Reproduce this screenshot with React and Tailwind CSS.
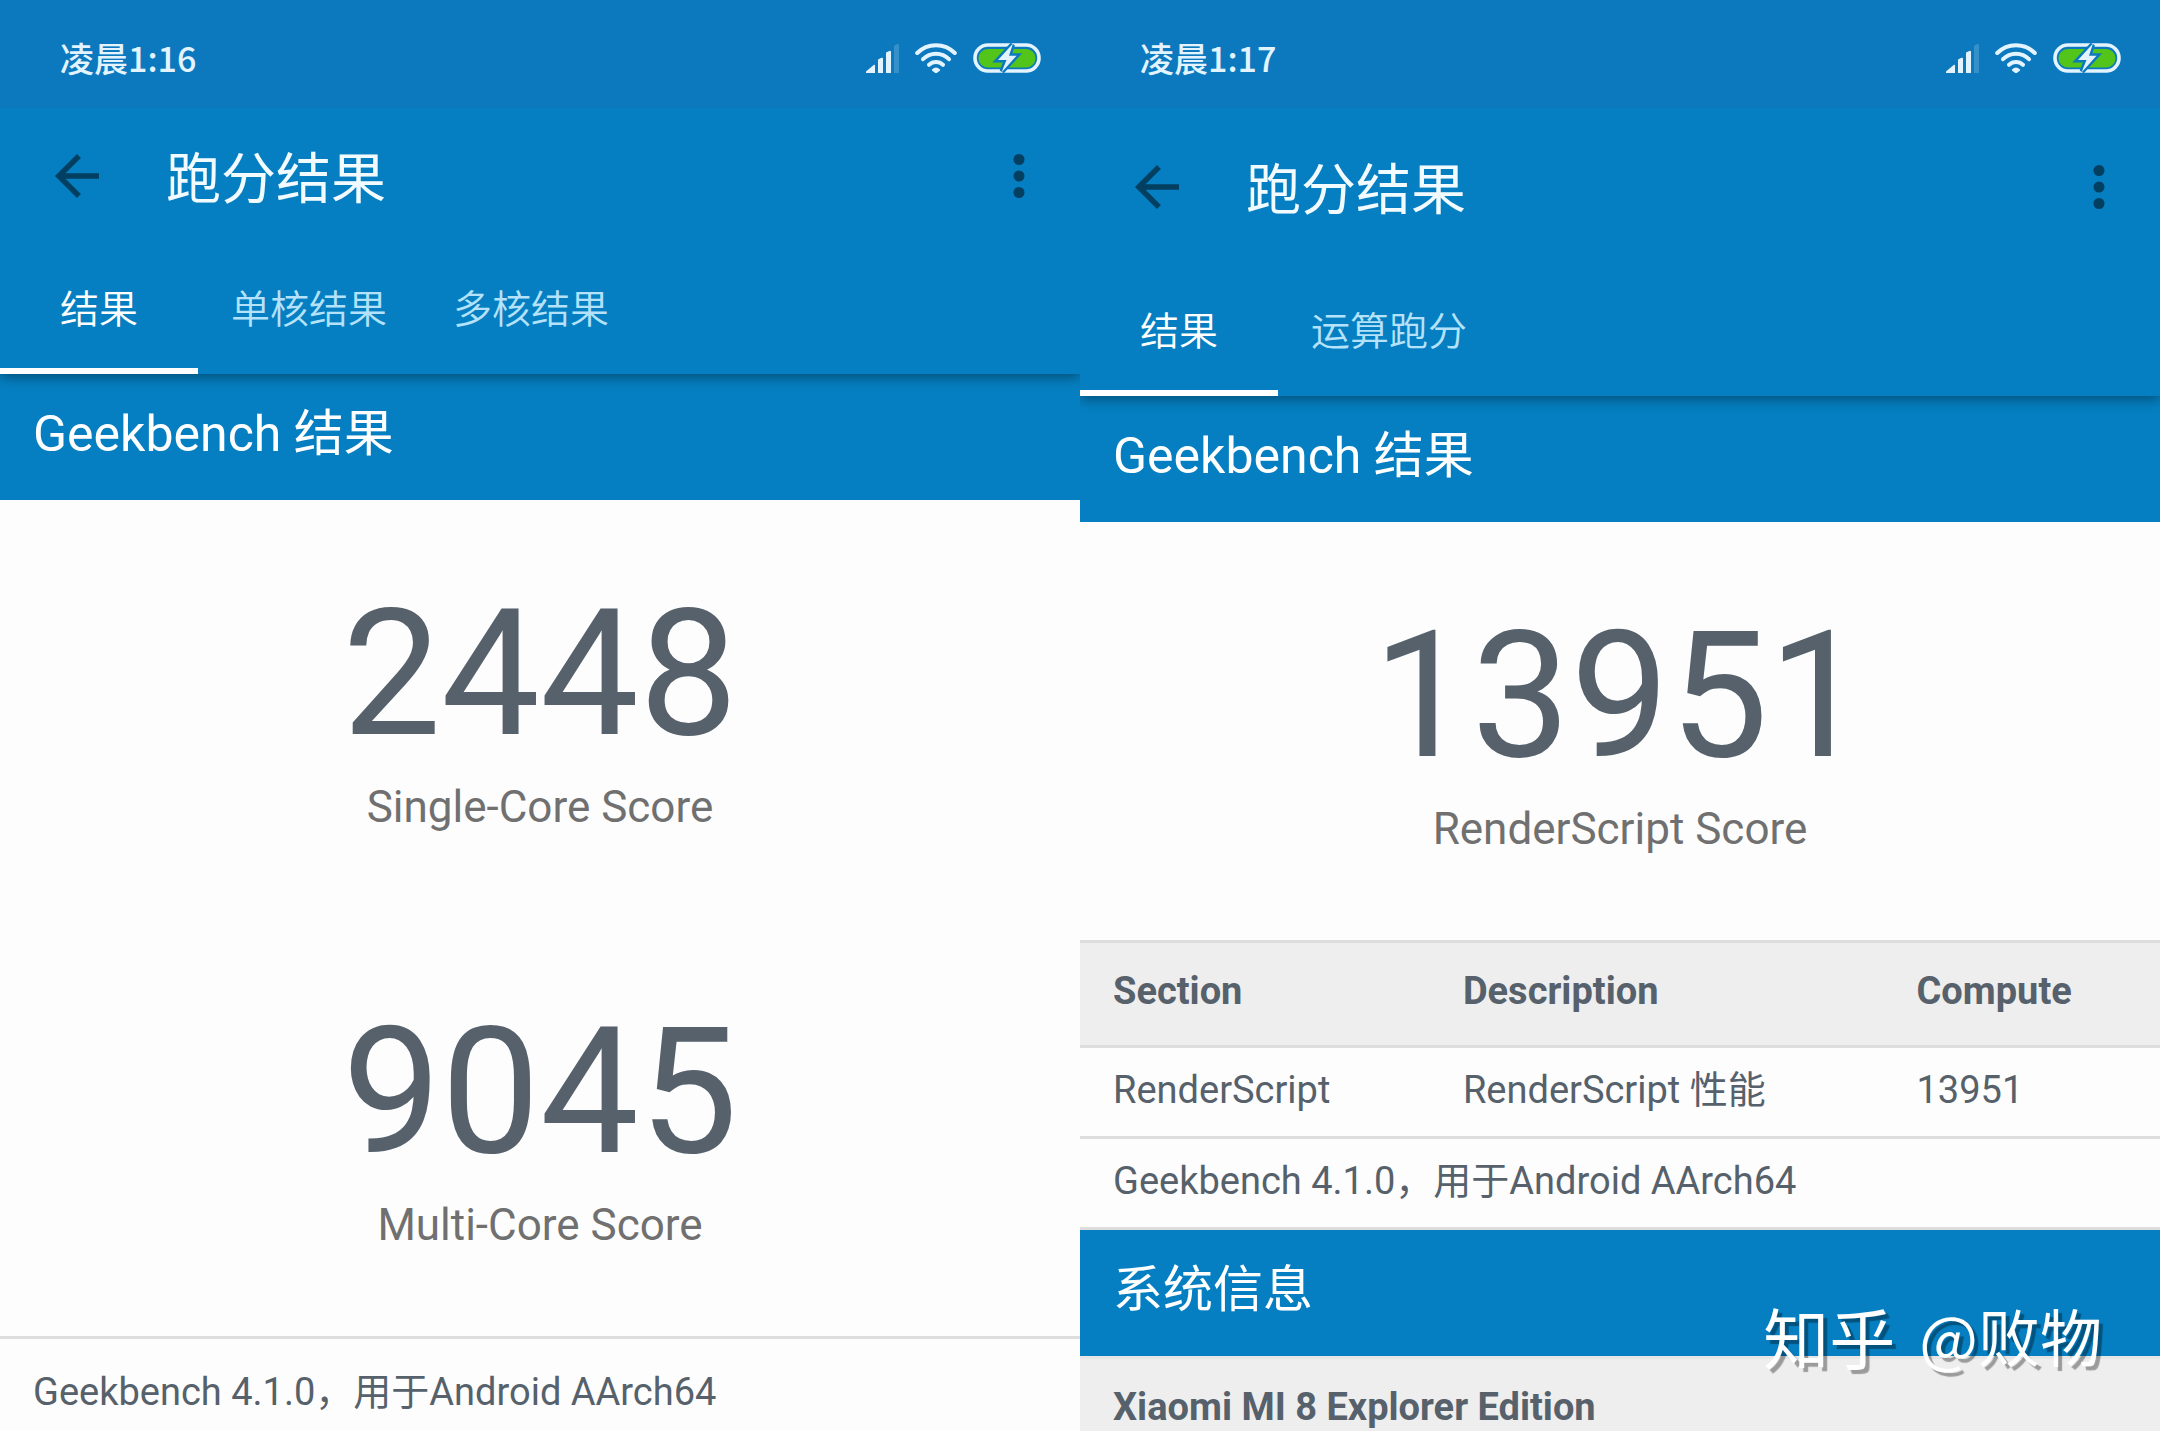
import React, { useState } from 'react';
import clsx from 'clsx';

const VERSION_TEXT = 'Geekbench 4.1.0，用于Android AArch64';

const SignalIcon = () => (
  <svg viewBox="0 0 33 29" className="w-[33px] h-[29px]" fill="#e3f4ff">
    <path d="M0 29V27.5L8 20.8Q9 20.5 9 21.5V29Z" />
    <path d="M12 29V15.5L15.5 13.7Q17 13.4 17 14.6V29Z" />
    <path d="M20 29V8.6L23.5 6.9Q25 6.6 25 7.8V29Z" />
    <path d="M28 29V1.7L31.5 0Q33 -0.2 33 1V29Z" opacity="0.2" />
  </svg>
);

const WifiIcon = () => (
  <svg viewBox="0 0 42 30" className="w-[42px] h-[30px]" fill="none" stroke="#e3f4ff" strokeWidth="4" strokeLinecap="round">
    <path d="M2.2 10A26.5 26.5 0 0 1 39.8 10" />
    <path d="M8 16.2A18 18 0 0 1 34 16.2" />
    <path d="M14 21.8A10 10 0 0 1 28 21.8" />
    <path d="M17 26.6Q21 22.4 25 26.6Q25.4 27.2 24.8 27.8L22.4 29.5Q21 30.5 19.6 29.5L17.2 27.8Q16.6 27.2 17 26.6Z" fill="#e3f4ff" stroke="none" />
  </svg>
);

const BatteryIcon = () => (
  <svg viewBox="0 0 68 30" className="w-[68px] h-[30px]">
    <rect x="2" y="2" width="64" height="26" rx="13" fill="none" stroke="#e3f4ff" strokeWidth="3.6" />
    <rect x="5.5" y="6" width="57" height="18.5" rx="9.2" fill="#52c41a" />
    <path
      d="M39.5 1.5L25 17H33.5L29 28.5L43.5 12.8H36Z"
      fill="#0c79bf"
      stroke="#0c79bf"
      strokeWidth="5"
    />
    <path d="M40 0.5L25 17H33.5L28.5 29.5L43.5 12.8H36Z" fill="#e3f4ff" />
  </svg>
);

const BackIcon = () => (
  <svg viewBox="0 0 24 24" className="w-[66px] h-[66px]" fill="#033f61">
    <path d="M20 11H7.83l5.59-5.59L12 4l-8 8 8 8 1.41-1.41L7.83 13H20v-2z" />
  </svg>
);

const MoreIcon = () => (
  <svg viewBox="0 0 24 24" className="w-[66px] h-[66px]" fill="#033f61">
    <circle cx="12" cy="6" r="2" />
    <circle cx="12" cy="12" r="2" />
    <circle cx="12" cy="18" r="2" />
  </svg>
);

const StatusBar = ({ time }) => (
  <div className="flex items-center justify-between h-27 pt-2 pl-[60px] pr-[39px] bg-[#0c79bf]">
    <span className="font-['Noto_Sans_CJK_SC',sans-serif] text-[34px] leading-[52px] font-medium text-[#e3f4ff]">{time}</span>
    <div className="flex items-center gap-4">
      <SignalIcon />
      <WifiIcon />
      <BatteryIcon />
    </div>
  </div>
);

const AppBar = ({ time, tabs, tall }) => {
  const [active, setActive] = useState(0);

  return (
    <header className="relative z-10 bg-[#057fc1] shadow-[0_3px_12px_rgba(0,0,0,0.4)]">
      <StatusBar time={time} />
      <div className={clsx('flex items-center pb-1 pl-11 pr-[28px]', tall ? 'h-[162px]' : 'h-[140px]')}>
        <button type="button" aria-label="返回">
          <BackIcon />
        </button>
        <h1 className="flex-1 ml-14 pt-1.5 text-[55px] leading-[80px] text-[#f2fbff]">跑分结果</h1>
        <button type="button" aria-label="更多选项">
          <MoreIcon />
        </button>
      </div>
      <div role="tablist" className="flex h-[126px]">
        {tabs.map((tab, i) => (
          <button
            key={tab}
            type="button"
            role="tab"
            aria-selected={i === active}
            onClick={() => setActive(i)}
            className={clsx(
              'pt-1 border-b-6 text-[39px] leading-[60px] font-[350]',
              i === 0 ? 'px-[60px]' : 'px-[33px]',
              i === active ? 'border-white text-white' : 'border-transparent text-[#b4e2fa]'
            )}
          >
            {tab}
          </button>
        ))}
      </div>
    </header>
  );
};

const SectionTitle = ({ children }) => (
  <h2 className="pt-[30px] pb-9 px-[33px] bg-[#057fc1] text-[50px] leading-[60px] text-white">{children}</h2>
);

const Score = ({ value, label }) => (
  <div className="pt-[86px] pb-[81px] text-center">
    <p className="text-[176px] leading-[176px] text-[#56616b]">{value}</p>
    <p className="mt-[15px] text-[44px] leading-[60px] text-[#707070]">{label}</p>
  </div>
);

const CpuResult = () => (
  <section className="flex-1 min-w-0 overflow-hidden">
    <AppBar time="凌晨1:16" tabs={['结果', '单核结果', '多核结果']} />
    <SectionTitle>Geekbench 结果</SectionTitle>
    <Score value="2448" label="Single-Core Score" />
    <Score value="9045" label="Multi-Core Score" />
    <p className="border-t-3 border-[#dddddd] pt-[31px] pb-6 px-[33px] leading-[44px]">{VERSION_TEXT}</p>
  </section>
);

const ComputeResult = () => (
  <section className="flex-1 min-w-0 overflow-hidden">
    <AppBar time="凌晨1:17" tabs={['结果', '运算跑分']} tall />
    <SectionTitle>Geekbench 结果</SectionTitle>
    <Score value="13951" label="RenderScript Score" />
    <table className="w-full table-fixed text-left leading-[44px]">
      <thead className="bg-[#eeeeee]">
        <tr className="border-y-3 border-[#dddddd]">
          <th className="w-[32.4%] pt-[26px] pb-8 pl-[33px]">Section</th>
          <th className="w-[42%] pt-[26px] pb-8 pl-[33px]">Description</th>
          <th className="pt-[26px] pb-8 pl-[33px]">Compute</th>
        </tr>
      </thead>
      <tbody>
        <tr className="border-b-3 border-[#dddddd]">
          <td className="pt-5 pb-6 pl-[33px]">RenderScript</td>
          <td className="pt-5 pb-6 pl-[33px]">RenderScript 性能</td>
          <td className="pt-5 pb-6 pl-[33px]">13951</td>
        </tr>
        <tr className="border-b-3 border-[#dddddd]">
          <td colSpan={3} className="pt-5 pb-6 pl-[33px]">{VERSION_TEXT}</td>
        </tr>
      </tbody>
    </table>
    <SectionTitle>系统信息</SectionTitle>
    <h3 className="border-t-3 border-[#e6e6e6] bg-[#eeeeee] pt-[26px] pb-8 px-[33px] leading-[44px] font-bold">
      Xiaomi MI 8 Explorer Edition
    </h3>
  </section>
);

export default function App() {
  return (
    <main className="relative flex h-screen overflow-hidden bg-[#fdfdfd] font-['Roboto','Noto_Sans_CJK_SC',sans-serif] text-[38px] text-[#56616b]">
      <CpuResult />
      <ComputeResult />
      {/* Watermark */}
      <div className="absolute z-20 right-[58px] bottom-[52px] flex items-center gap-6 font-['Noto_Sans_CJK_SC',sans-serif] leading-[88px] text-white [text-shadow:4px_4px_1px_rgba(0,0,0,0.35)]">
        <span className="text-[66px]">知乎</span>
        <span className="text-[62px]">@败物</span>
      </div>
    </main>
  );
}
